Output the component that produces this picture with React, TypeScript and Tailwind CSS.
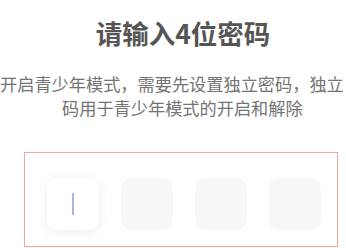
export default function App() {
  const boxes = [0, 1, 2, 3];

  return (
    <div
      className="w-[346px] h-[248px] overflow-hidden bg-white"
      style={{ fontFamily: '"Noto Sans CJK SC", "Noto Sans", sans-serif' }}
    >
      <div className="ml-[20px] w-[326px] pt-[17px] flex flex-col items-center">
        <h1 className="text-[26.5px] leading-[32px] font-bold text-[#555555]">
          请输入4位密码
        </h1>
      </div>

      {/* subtitle overflows the narrow window on the left and right */}
      <div className="mt-[23px] text-[17.2px] leading-[24px] text-[#747474] whitespace-nowrap">
        <div>开启青少年模式，需要先设置独立密码，独立</div>
        <div className="pl-[62px]">码用于青少年模式的开启和解除</div>
      </div>

      <div className="ml-[24px] mt-[32px] w-[314px] border border-[#eaa9a1] pl-[22px] pt-[25px] pb-[16px]">
        <div className="flex gap-[22px]">
          {boxes.map((i) =>
            i === 0 ? (
              <div
                key={i}
                className="w-[52px] h-[52px] rounded-[10px] bg-white shadow-[0_2px_12px_rgba(0,0,0,0.08)] flex items-center justify-center"
              >
                <div className="w-[2px] h-[22px] bg-[#a9b4e0] ml-[-1px]" />
              </div>
            ) : (
              <div key={i} className="w-[52px] h-[52px] rounded-[10px] bg-[#f7f7f7]" />
            )
          )}
        </div>
      </div>
    </div>
  );
}
